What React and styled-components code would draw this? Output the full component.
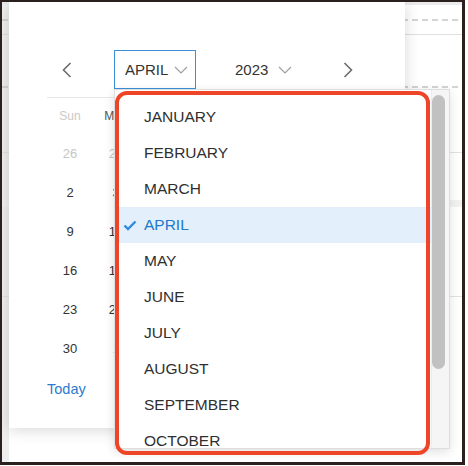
import React from 'react';
import styled, { createGlobalStyle } from 'styled-components';

const GlobalStyle = createGlobalStyle`
  html, body { margin: 0; padding: 0; background: #fff; }
  body { font-family: "Liberation Sans", Arial, Helvetica, sans-serif; }
`;

const Frame = styled.div`
  width: 465px;
  height: 465px;
  box-sizing: border-box;
  border-style: solid;
  border-color: #2a211e;
  border-width: 2px 3px 3px 2px;
  overflow: hidden;
`;

const Page = styled.div`
  position: relative;
  width: 100%;
  height: 100%;
  background-color: #fff;
  background-image:
    linear-gradient(#ebebeb, #ebebeb),
    repeating-linear-gradient(to right, #d4d4d4 0 6px, transparent 6px 10px),
    repeating-linear-gradient(to right, #d4d4d4 0 6px, transparent 6px 10px),
    linear-gradient(#e0e0e0, #e0e0e0),
    linear-gradient(#e2e2e2, #e2e2e2),
    linear-gradient(#f2f2f2, #f2f2f2),
    linear-gradient(#e2e2e2, #e2e2e2),
    linear-gradient(#efefef, #efefef);
  background-size: 100% 3px, 100% 2px, 100% 2px, 100% 1px, 100% 1px, 100% 7px, 100% 1px, 7px 100%;
  background-position: 0 0, 0 17px, 0 84px, 0 32px, 0 150px, 0 198px, 0 294px, 0 0;
  background-repeat: no-repeat;
`;

const Popover = styled.div`
  position: absolute;
  left: 7px;
  top: 0;
  width: 396px;
  height: 426px;
  box-sizing: border-box;
  background: #fff;
  box-shadow: 0 2px 14px rgba(0, 0, 0, 0.16);
  padding: 48px 37.5px 18px 38px;
  display: flex;
  flex-direction: column;
`;

const Header = styled.div`
  display: flex;
  align-items: center;
  height: 39px;
`;

const NavButton = styled.button`
  width: 40px;
  height: 39px;
  padding: 0;
  border: none;
  background: transparent;
  display: flex;
  align-items: center;
  justify-content: center;
  margin-left: ${p => (p.$end ? 'auto' : '0')};
`;

const SelectWrap = styled.div`
  position: relative;
  margin-left: ${p => p.$offset}px;
`;

const SelectTrigger = styled.div`
  width: 82px;
  height: 39px;
  box-sizing: border-box;
  border: 1px solid ${p => (p.$open ? '#3d8fd8' : 'transparent')};
  padding: 0 7px 0 10px;
  display: flex;
  align-items: center;
  justify-content: ${p => (p.$open ? 'space-between' : 'flex-start')};
  gap: ${p => (p.$open ? '0' : '10px')};
  font-size: 15px;
  color: #333;

  svg { flex-shrink: 0; }
`;

const Divider = styled.div`
  height: 1px;
  width: 322px;
  background: #e8e8e8;
  margin-top: 8px;
`;

const Grid = styled.div`
  display: grid;
  grid-template-columns: repeat(7, 46px);
  grid-auto-rows: 39px;
  width: 322px;
`;

const WeekRow = styled(Grid)`
  grid-auto-rows: 36px;
`;

const WeekDay = styled.div`
  display: flex;
  align-items: center;
  justify-content: center;
  font-size: 12px;
  color: ${p => (p.$muted ? '#c9c9c9' : '#555')};
`;

const Day = styled.div`
  display: flex;
  align-items: center;
  justify-content: center;
  font-size: 13px;
  color: ${p => (p.$muted ? '#c6c6c6' : '#333')};
`;

const Footer = styled.div`
  height: 42px;
  display: flex;
  align-items: center;
`;

const TodayLink = styled.span`
  font-size: 14.5px;
  color: #2a7bce;
`;

const Dropdown = styled.div`
  position: absolute;
  left: 0;
  top: 100%;
  width: 336px;
  height: 360px;
  box-sizing: border-box;
  background: #fff;
  border: 1px solid #dedede;
  box-shadow: 0 3px 10px rgba(0, 0, 0, 0.12);
  display: flex;
  z-index: 5;
`;

const List = styled.div`
  flex: 1;
  overflow: hidden;
  padding-top: 9px;
`;

const Item = styled.div`
  height: 36px;
  display: flex;
  align-items: center;
  padding-left: 8px;
  background: ${p => (p.$selected ? '#e3effb' : 'transparent')};
  color: ${p => (p.$selected ? '#2179cc' : '#2f2f2f')};
  font-size: 15.5px;
`;

const CheckSlot = styled.span`
  width: 21px;
  display: flex;
  align-items: center;
`;

const Track = styled.div`
  width: 18px;
  background: #f5f5f5;
  border-left: 1px solid #ececec;
  box-sizing: border-box;
  padding-top: 5px;
`;

const Thumb = styled.div`
  width: 13px;
  height: 274px;
  border-radius: 7px;
  background: #c1c1c1;
`;

const Highlight = styled.div`
  position: absolute;
  left: 0;
  top: 1px;
  width: 315px;
  height: 364px;
  box-sizing: border-box;
  border: 4px solid #ee4529;
  border-radius: 12px;
  pointer-events: none;
`;

const Chevron = () => (
  <svg width="14" height="8" viewBox="0 0 14 8">
    <polyline points="1,1 7,7 13,1" fill="none" stroke="#9c9c9c" strokeWidth="1.1" />
  </svg>
);

const Arrow = ({ dir }) => (
  <svg width="10" height="16" viewBox="0 0 10 16">
    <polyline
      points={dir === 'left' ? '8.5,1 1.5,8 8.5,15' : '1.5,1 8.5,8 1.5,15'}
      fill="none"
      stroke="#6c6c6c"
      strokeWidth="1.6"
    />
  </svg>
);

const Check = () => (
  <svg width="14" height="11" viewBox="0 0 14 11">
    <polyline points="1.5,5.5 5,9 12.5,1.5" fill="none" stroke="#2f8ae0" strokeWidth="2.4" />
  </svg>
);

const months = [
  'JANUARY', 'FEBRUARY', 'MARCH', 'APRIL', 'MAY', 'JUNE',
  'JULY', 'AUGUST', 'SEPTEMBER', 'OCTOBER',
];

const weekDays = ['Sun', 'Mon', 'Tue', 'Wed', 'Thu', 'Fri', 'Sat'];

const buildDays = () => {
  const days = [];
  for (let d = 26; d <= 31; d++) days.push({ n: d, muted: true });
  for (let d = 1; d <= 30; d++) days.push({ n: d, muted: false });
  let d = 1;
  while (days.length < 42) days.push({ n: d++, muted: true });
  return days;
};

export default function App() {
  const days = buildDays();
  return (
    <>
      <GlobalStyle />
      <Frame>
        <Page>
          <Popover>
            <Header>
              <NavButton><Arrow dir="left" /></NavButton>
              <SelectWrap $offset={27}>
                <SelectTrigger $open>
                  <span>APRIL</span>
                  <Chevron />
                </SelectTrigger>
                <Dropdown>
                  <List>
                    {months.map(m => (
                      <Item key={m} $selected={m === 'APRIL'}>
                        <CheckSlot>{m === 'APRIL' && <Check />}</CheckSlot>
                        <span>{m}</span>
                      </Item>
                    ))}
                  </List>
                  <Track>
                    <Thumb />
                  </Track>
                  <Highlight />
                </Dropdown>
              </SelectWrap>
              <SelectWrap $offset={28}>
                <SelectTrigger>
                  <span>2023</span>
                  <Chevron />
                </SelectTrigger>
              </SelectWrap>
              <NavButton $end><Arrow dir="right" /></NavButton>
            </Header>
            <Divider />
            <WeekRow>
              {weekDays.map((w, i) => (
                <WeekDay key={w} $muted={i === 0 || i === 6}>{w}</WeekDay>
              ))}
            </WeekRow>
            <Grid>
              {days.map((d, i) => (
                <Day key={i} $muted={d.muted}>{d.n}</Day>
              ))}
            </Grid>
            <Footer>
              <TodayLink>Today</TodayLink>
            </Footer>
          </Popover>
        </Page>
      </Frame>
    </>
  );
}
